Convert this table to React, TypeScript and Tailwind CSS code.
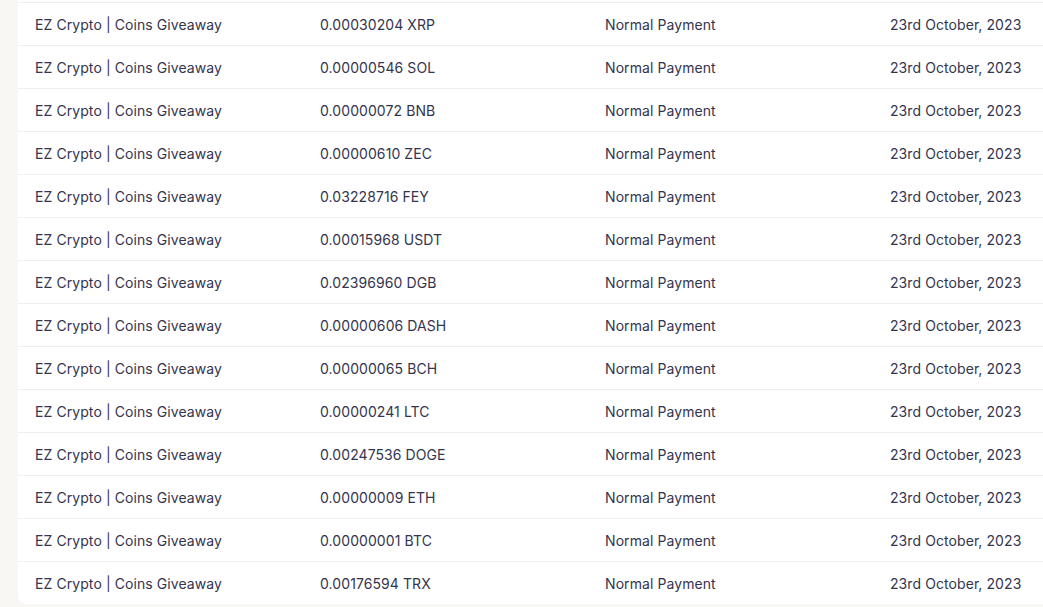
import React from "react";

const coins = [
  "0.00030204 XRP",
  "0.00000546 SOL",
  "0.00000072 BNB",
  "0.00000610 ZEC",
  "0.03228716 FEY",
  "0.00015968 USDT",
  "0.02396960 DGB",
  "0.00000606 DASH",
  "0.00000065 BCH",
  "0.00000241 LTC",
  "0.00247536 DOGE",
  "0.00000009 ETH",
  "0.00000001 BTC",
  "0.00176594 TRX",
];

export default function App() {
  return (
    <div
      className="w-[1043px] h-[607px] overflow-hidden bg-[#f8f7f3] pl-[18px]"
      style={{ fontFamily: "Inter, 'Noto Sans', sans-serif" }}
    >
      <div className="w-[1174px] bg-white rounded-b-lg pt-[2px]">
        {coins.map((c, i) => (
          <div
            key={i}
            className="h-[43px] border-t border-[#efefef] flex items-center px-[17px] text-[14px] tracking-[0.08px] text-[#34344f]"
          >
            <div className="w-[285px]">EZ Crypto | Coins Giveaway</div>
            <div className="w-[285px]">{c}</div>
            <div className="w-[285px]">Normal Payment</div>
            <div className="w-[285px]">23rd October, 2023</div>
          </div>
        ))}
      </div>
    </div>
  );
}
